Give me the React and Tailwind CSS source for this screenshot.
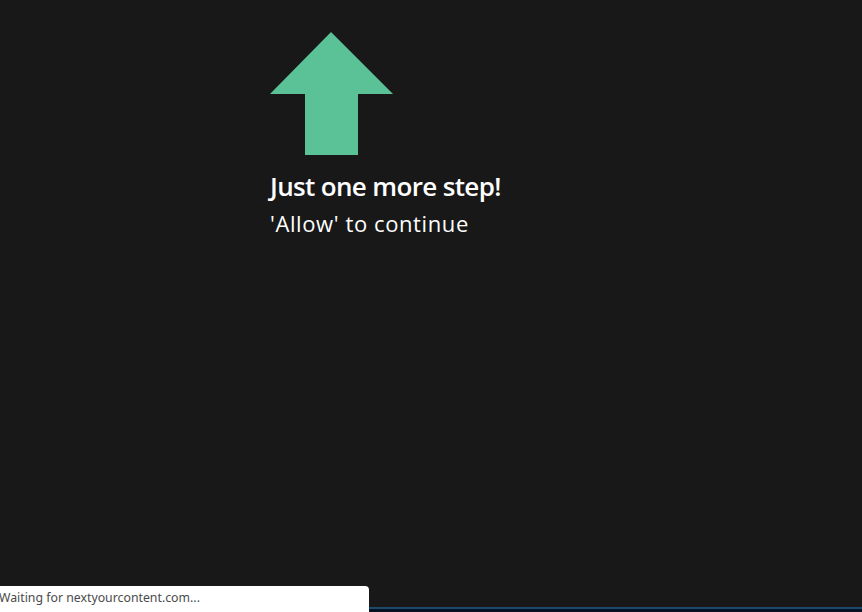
export default function App() {
  return (
    <div className="relative w-[862px] h-[612px] overflow-hidden bg-[#181818]" style={{ fontFamily: '"Open Sans", sans-serif' }}>
      <div className="flex flex-col items-start pl-[270px] pt-[32px]">
        <svg width="124" height="124" viewBox="0 0 124 124" className="block">
          <polygon points="61,0 123,62 88,62 88,123 35,123 35,62 0,62" fill="#5bc298" />
        </svg>
        <h1 className="mt-[13px] text-[26px] leading-[35px] font-semibold text-white tracking-[-0.65px]">Just one more step!</h1>
        <p className="mt-[4px] text-[22px] leading-[30px] text-white tracking-[0.6px]">'Allow' to continue</p>
      </div>
      <div className="absolute left-0 bottom-0 w-full h-[5px] flex flex-col">
        <div className="h-[2px] bg-[#1d4a6a]" />
        <div className="flex-1 bg-[#071224]" />
      </div>
      <div className="absolute left-0 bottom-0 w-[369px] h-[26px] bg-white rounded-tr-[4px] flex items-center pb-[1px]">
        <span className="ml-[-1px] text-[12.3px] text-[#4a4a4a]" style={{ fontFamily: '"Noto Sans", "Open Sans", sans-serif' }}>Waiting for nextyourcontent.com...</span>
      </div>
    </div>
  );
}
